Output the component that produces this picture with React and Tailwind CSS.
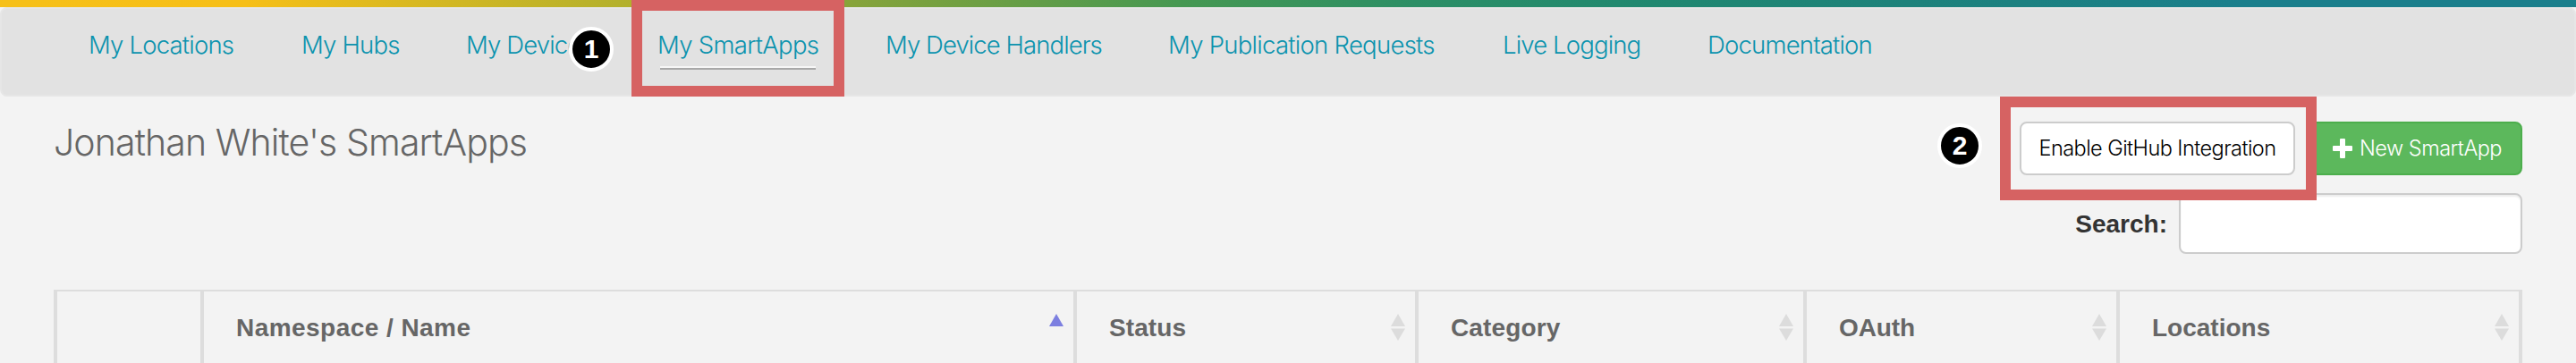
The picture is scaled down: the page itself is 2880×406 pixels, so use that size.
const navItems = [
  { label: "My Locations", box: "w-[238px] tracking-[-0.8px]" },
  { label: "My Hubs", box: "w-[184px] tracking-[-0.8px]" },
  { label: "My Devices", box: "w-[214px] tracking-[-0.85px]", badge: "1" },
  { label: "My SmartApps", box: "w-[255px] tracking-[-0.7px]", active: true },
  { label: "My Device Handlers", box: "w-[316px] tracking-[-0.92px]" },
  { label: "My Publication Requests", box: "w-[374px] tracking-[-0.72px]" },
  { label: "Live Logging", box: "w-[229px] tracking-[-0.85px]" },
  { label: "Documentation", box: "w-[200px] tracking-[-0.8px]" },
];

const columns = [
  { label: "Namespace / Name", box: "w-[976px] pl-9 tracking-[0.45px]", sort: "asc" },
  { label: "Status", box: "w-[382px] pl-9 tracking-[0.1px]", sort: "both" },
  { label: "Category", box: "w-[434px] pl-9 tracking-[0.15px]", sort: "both" },
  { label: "OAuth", box: "w-[350px] pl-9 tracking-[-0.1px]", sort: "both" },
  { label: "Locations", box: "w-[450px] pl-9", sort: "both" },
];

function Badge({ children, className }) {
  return (
    <span
      className={`absolute flex size-[50px] items-center justify-center rounded-full border-4 border-white bg-black font-['Liberation_Sans',sans-serif] text-[30px] leading-none font-bold tracking-normal text-white ${className}`}
    >
      {children}
    </span>
  );
}

function SortIcon({ sort }) {
  return (
    <svg className="mr-[11px] h-8 w-4" viewBox="0 0 16 32">
      <path d="M8 1 L16 15 H0 Z" fill={sort === "asc" ? "#7c7fe0" : "#dcdcdc"} />
      {sort === "both" && <path d="M0 17.500 H16 L8 31 Z" fill="#dcdcdc" />}
    </svg>
  );
}

export default function App() {
  return (
    <div className="h-[406px] w-[2880px] overflow-hidden bg-[#f3f3f3] font-[Inter,'Liberation_Sans',sans-serif]">
      <div className="h-2 bg-[linear-gradient(90deg,#f6c018_0%,#f6bf17_9.5%,#b0b02d_25%,#87a43a_33%,#459852_46%,#2c8f66_55%,#208870_64%,#1d827b_74%,#1a7f8c_87%,#1a7f8c_100%)]" />
      <nav className="flex h-[100px] rounded-lg border-2 border-[#e6e6e6] bg-[#e2e2e2] pl-[97px]">
        {navItems.map((item) => (
          <div
            key={item.label}
            className={`relative shrink-0 pt-[23px] text-[27.5px] leading-[34px] font-light whitespace-nowrap text-[#0b93ae] ${item.box}`}
          >
            {item.label}
            {item.active && (
              <>
                <span className="mt-[7px] ml-[3px] block h-1 w-[174px] border-t-2 border-b-2 border-t-[#f6f6f6] border-b-[#a8a8a8]" />
                <span className="absolute -top-[10px] -left-[29px] h-[108px] w-[238px] border-12 border-[#d66262]" />
              </>
            )}
            {item.badge && <Badge className="top-[20px] left-[115px]">{item.badge}</Badge>}
          </div>
        ))}
      </nav>

      <header className="flex h-[108px] items-start justify-between px-[60px] pt-7">
        <h1 className="-mt-[2px] text-[41px] leading-[50px] font-light tracking-[-0.88px] text-[#666]">
          Jonathan White's SmartApps
        </h1>
        <div className="relative flex gap-4 text-[23.5px] leading-[56px] font-light whitespace-nowrap">
          <Badge className="top-[2px] -left-[92px]">2</Badge>
          <button className="h-[60px] w-[308px] rounded-lg border-2 border-[#ccc] bg-white tracking-[-0.55px] text-black">
            Enable GitHub Integration
          </button>
          <button className="flex h-[60px] w-[238px] items-center rounded-lg border-2 border-[#4cae4c] bg-[#5cb85c] pl-6 tracking-[-0.5px] text-white">
            <svg className="mr-2 size-[22px]" viewBox="0 0 22 22" fill="#fff">
              <rect x="8" width="6" height="22" rx="1" />
              <rect y="8" width="22" height="6" rx="1" />
            </svg>
            New SmartApp
          </button>
          <span className="absolute -top-7 -left-[22px] h-[116px] w-[354px] border-12 border-[#d66262]" />
        </div>
      </header>

      <div className="flex h-[108px] items-start justify-end pr-[60px]">
        <label className="mr-[13px] pt-[19px] font-['Liberation_Sans',sans-serif] text-[28px] leading-8 font-bold text-[#333]">
          Search:
        </label>
        <input className="h-[68px] w-[384px] rounded-lg border-2 border-[#ccc] bg-white shadow-[inset_0_2px_2px_rgba(0,0,0,0.075)]" />
      </div>

      <div className="mx-[60px] flex h-[82px] border-t-2 border-l-4 border-[#ddd] font-['Liberation_Sans',sans-serif] text-[28px] leading-8 font-bold text-[#666]">
        <div className="w-[164px] shrink-0 border-r-4 border-[#ddd]" />
        {columns.map((col) => (
          <div
            key={col.label}
            className={`flex shrink-0 items-start justify-between border-r-4 border-[#ddd] pt-6 ${col.box}`}
          >
            <span className="pt-px">{col.label}</span>
            <SortIcon sort={col.sort} />
          </div>
        ))}
      </div>
    </div>
  );
}
